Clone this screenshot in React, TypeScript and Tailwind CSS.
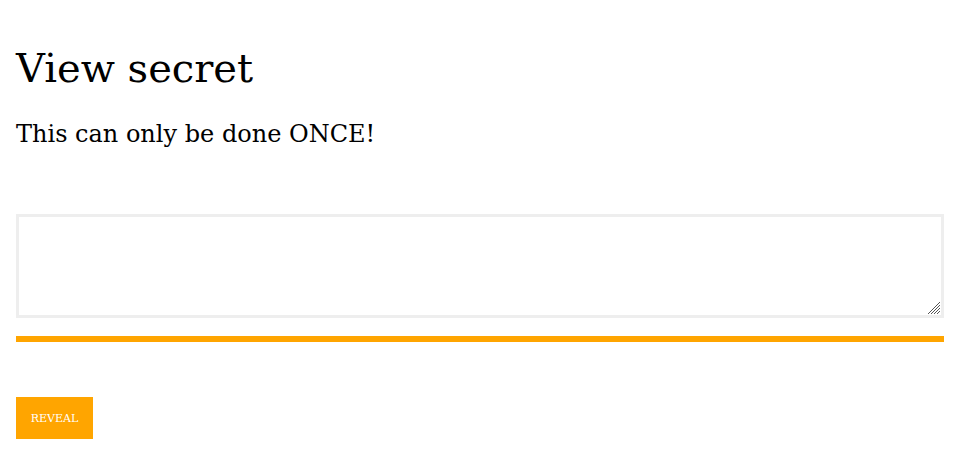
import React, { useState } from 'react';

// hatched resize grip, like the one the reference browser draws
const Grip = () => (
  <svg width="12" height="12" viewBox="0 0 12 12" className="pointer-events-none absolute bottom-[4px] right-[4px]">
    <g stroke="#555" strokeWidth="1" shapeRendering="crispEdges">
      <path d="M0 12L12 0" />
      <path d="M3 12L12 3" />
      <path d="M6 12L12 6" />
      <path d="M9 12L12 9" />
    </g>
  </svg>
);

export default function App() {
  const [secret] = useState('');

  return (
    <div className="min-h-[460px] bg-white px-4 pt-[44px] text-black" style={{ fontFamily: '"DejaVu Serif", serif' }}>
      <h1 className="text-[40px] leading-[48px]">View secret</h1>
      <p className="mt-[27px] text-[24px] leading-[30px]">This can only be done ONCE!</p>

      <div className="mt-[65px]">
        <div className="relative">
          <textarea
            readOnly
            value={secret}
            className="block h-[104px] w-full resize-none border-[3px] border-[#eeeeee] outline-none"
          />
          <Grip />
        </div>
        <div className="mt-[18px] h-[6px] w-full bg-[#ffa500]" />
      </div>

      <button className="mt-[55px] h-[42px] w-[77px] bg-[#ffa500] pt-[2px] text-[11px] text-white">
        REVEAL
      </button>
    </div>
  );
}
